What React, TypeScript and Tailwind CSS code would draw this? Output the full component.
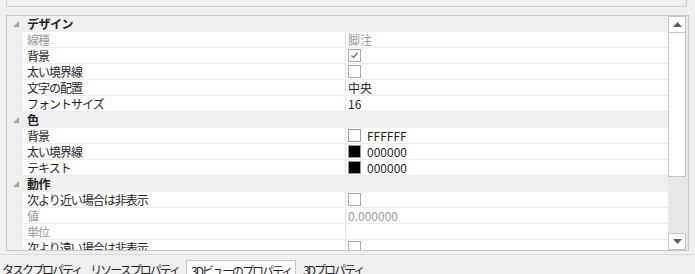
import React from "react";

type Row =
  | { kind: "header"; label: string }
  | {
      kind: "prop";
      label: string;
      disabled?: boolean;
      value?: string;
      check?: "on" | "off";
      swatch?: "white" | "black";
    };

const rows: Row[] = [
  { kind: "header", label: "デザイン" },
  { kind: "prop", label: "線種", disabled: true, value: "脚注" },
  { kind: "prop", label: "背景", check: "on" },
  { kind: "prop", label: "太い境界線", check: "off" },
  { kind: "prop", label: "文字の配置", value: "中央" },
  { kind: "prop", label: "フォントサイズ", value: "16" },
  { kind: "header", label: "色" },
  { kind: "prop", label: "背景", swatch: "white", value: "FFFFFF" },
  { kind: "prop", label: "太い境界線", swatch: "black", value: "000000" },
  { kind: "prop", label: "テキスト", swatch: "black", value: "000000" },
  { kind: "header", label: "動作" },
  { kind: "prop", label: "次より近い場合は非表示", check: "off" },
  { kind: "prop", label: "値", disabled: true, value: "0.000000" },
  { kind: "prop", label: "単位", disabled: true },
  { kind: "prop", label: "次より遠い場合は非表示", check: "off" },
];

const font = { fontFamily: '"Noto Sans CJK JP", "Noto Sans", sans-serif' };

function Checkbox({ on }: { on: boolean }) {
  return (
    <div className="w-[13px] h-[13px] border border-[#a8a8a8] bg-white flex items-center justify-center">
      {on && (
        <svg width="9" height="9" viewBox="0 0 9 9">
          <path d="M1.5 4.5 L3.5 6.5 L7.5 2" stroke="#707070" strokeWidth="1.4" fill="none" />
        </svg>
      )}
    </div>
  );
}

function GridRow({ row }: { row: Row }) {
  if (row.kind === "header") {
    return (
      <div className="h-[16px] shrink-0 flex items-center bg-[#efefef]">
        <div className="w-[16px] h-full flex items-center justify-center">
          <svg width="6" height="6" viewBox="0 0 6 6" className="ml-[2px]">
            <path d="M6 0 L6 6 L0 6 Z" fill="#a6a6a6" />
          </svg>
        </div>
        <div className="pl-[4px] text-[12px] leading-[16px] font-bold tracking-[-0.5px] text-[#1e1e1e]">{row.label}</div>
      </div>
    );
  }
  const textColor = row.disabled ? "text-[#9a9a9a]" : "text-[#1e1e1e]";
  return (
    <div className="h-[16px] shrink-0 flex bg-[#efefef]">
      <div className="w-[16px] shrink-0" />
      <div className="flex-1 flex bg-white border-b border-[#ececec]">
        <div className={`w-[323px] shrink-0 pl-[4px] text-[12px] leading-[15px] tracking-[-1px] border-r border-[#e4e4e4] whitespace-nowrap ${textColor}`}>
          {row.label}
        </div>
        <div className={`flex-1 flex items-center pl-[2px] text-[12px] leading-[15px] whitespace-nowrap ${textColor}`}>
          {row.check && <Checkbox on={row.check === "on"} />}
          {row.swatch && (
            <div
              className={`w-[13px] h-[13px] border border-[#9a9a9a] mr-[6px] ${
                row.swatch === "black" ? "bg-black" : "bg-white"
              }`}
            />
          )}
          {row.value && <span>{row.value}</span>}
        </div>
      </div>
    </div>
  );
}

function ScrollButton({ down }: { down?: boolean }) {
  return (
    <div className="w-[18px] h-[17px] shrink-0 border border-[#c4c4c4] bg-white flex items-center justify-center">
      <svg width="9" height="5" viewBox="0 0 9 5">
        {down ? <path d="M0 0 L9 0 L4.5 5 Z" fill="#5a5a5a" /> : <path d="M0 5 L9 5 L4.5 0 Z" fill="#5a5a5a" />}
      </svg>
    </div>
  );
}

export default function App() {
  return (
    <div className="w-[695px] h-[274px] bg-[#f0f0f0] flex flex-col overflow-hidden" style={font}>
      <div className="ml-[6px] w-[681px] h-[7px] shrink-0 border-x border-b border-[#cdcdcd] rounded-b-[3px]" />
      <div className="mt-[8px] ml-[6px] w-[683px] h-[236px] shrink-0 border border-[#c6c6c6] flex bg-white">
        <div className="w-[661px] flex flex-col overflow-hidden">
          {rows.map((r, i) => (
            <GridRow key={i} row={r} />
          ))}
        </div>
        <div className="flex-1 bg-[#e8e8e8] flex flex-col">
          <ScrollButton />
          <div className="w-[18px] h-[144px] shrink-0 border-x border-b border-[#c4c4c4] bg-white" />
          <div className="flex-1" />
          <ScrollButton down />
        </div>
      </div>
      <div className="mt-[3px] flex-1 border-t border-[#dadada] pt-[5px] text-[12px] text-[#1e1e1e] tracking-[-2px]">
        <div className="flex items-start">
          <div className="h-[14px] pl-[2px] pr-[9px] leading-[19px] whitespace-nowrap">タスクプロパティ</div>
          <div className="h-[14px] pr-[7px] leading-[19px] whitespace-nowrap">リソースプロパティ</div>
          <div className="h-[16px] px-[4px] bg-white border-x border-t border-[#c6c6c6] leading-[19px] whitespace-nowrap">
            3Dビューのプロパティ
          </div>
          <div className="h-[14px] pl-[7px] leading-[19px] whitespace-nowrap">3Dプロパティ</div>
        </div>
      </div>
    </div>
  );
}
